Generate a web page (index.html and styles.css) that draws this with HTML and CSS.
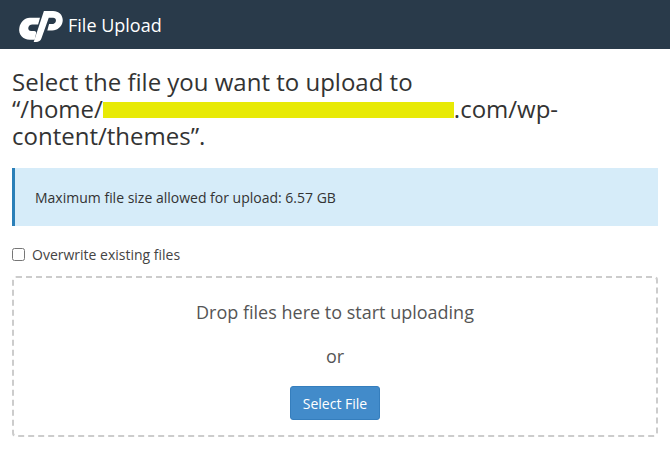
FILE: index.html
```html
<!DOCTYPE html>
<html lang="en">
<head>
<meta charset="utf-8">
<title>File Upload</title>
<link rel="stylesheet" href="styles.css">
</head>
<body>
<header class="topbar">
  <svg class="logo" viewBox="0 0 46 36" aria-hidden="true">
    <path fill="#fff" d="M12 9h10.500l-2 7h-6c-2 0-3.500 1-4 3-.5 2 .8 3.500 2.800 3.500h3.200c1.500 0 2.400 1.100 2 2.500L17 31.500h-5C5 31.500 0 26 1.200 19.500 2.200 13.500 6.500 9 12 9z"/>
    <path fill="#fff" d="M26.500 2H36c6 0 10.500 4.500 9.800 10.500-.7 5.500-5.300 9.500-10.800 9.500h-5l1.800-6.500h3c2 0 3.500-1.200 4-3 .4-2-.8-3.500-2.800-3.500h-4.500L24 30c-.8 2.500-3 4-5.500 4H16L26.500 2z"/>
  </svg>
  <span class="title">File Upload</span>
</header>
<main class="content">
  <h1 class="heading">Select the file you want to upload to<br>“/home/<span class="redact"></span>.com/wp-<br>content/themes”.</h1>
  <div class="notice">Maximum file size allowed for upload: 6.57 GB</div>
  <label class="overwrite"><input type="checkbox" class="check"><span>Overwrite existing files</span></label>
  <section class="dropzone">
    <p class="drop-text">Drop files here to start uploading</p>
    <p class="drop-or">or</p>
    <button class="select-btn" type="button">Select File</button>
  </section>
</main>
</body>
</html>
```
FILE: styles.css
```css
* { box-sizing: border-box; }
html, body { margin: 0; padding: 0; }
body {
  width: 670px;
  height: 459px;
  overflow: hidden;
  background: #fff;
  color: #333;
  font-family: "Open Sans", sans-serif;
  font-size: 14px;
}
.topbar {
  height: 49px;
  background: #293a4a;
  display: flex;
  align-items: center;
  padding: 0 0 0 18px;
  gap: 5px;
}
.logo { width: 45px; height: 35px; display: block; margin-top: 4px; }
.title { color: #fff; font-size: 18px; }
.content { padding: 19px 12px 0; }
.heading {
  margin: 0;
  font-size: 24px;
  font-weight: 400;
  line-height: 27px;
  color: #333;
}
.redact {
  background: #e8ea06;
  display: inline-block;
  width: 351px;
  height: 16px;
  vertical-align: 0;
}
.notice {
  margin-top: 19px;
  height: 58px;
  background: #d6ecf9;
  border-left: 3px solid #2a7fb8;
  padding-left: 20px;
  display: flex;
  align-items: center;
  font-size: 14px;
  color: #333;
}
.overwrite {
  display: flex;
  align-items: center;
  gap: 7px;
  margin-top: 18px;
  height: 20px;
  font-size: 14px;
  color: #444;
}
.check { margin: 1px 0 0; width: 13px; height: 13px; }
.dropzone {
  margin-top: 12px;
  height: 161px;
  border: 2px dashed #ccc;
  border-radius: 4px;
  display: flex;
  flex-direction: column;
  align-items: center;
  padding-top: 22px;
  color: #555;
}
.drop-text { margin: 0; font-size: 18px; line-height: 25px; }
.drop-or { margin: 19px 0 0; font-size: 18px; line-height: 25px; }
.select-btn {
  margin-top: 17px;
  width: 90px;
  height: 34px;
  background: #428bca;
  border: 1px solid #357ebd;
  border-radius: 3px;
  color: #fff;
  font-family: inherit;
  font-size: 14px;
}
```
